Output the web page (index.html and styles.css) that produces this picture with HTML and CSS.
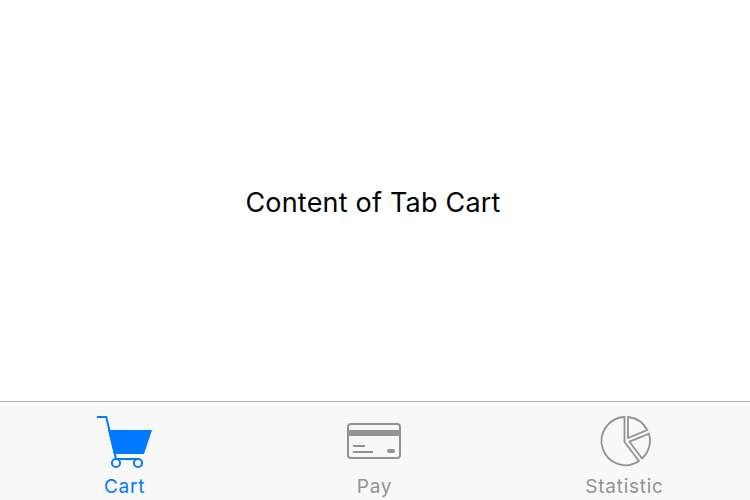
FILE: index.html
```html
<!DOCTYPE html>
<html lang="en">
<head>
<meta charset="utf-8">
<title>Tabs</title>
<link rel="stylesheet" href="styles.css">
</head>
<body>
<main class="content"><p class="message">Content of Tab Cart</p></main>
<nav class="tabbar">
  <a class="tab active">
    <svg class="icon" viewBox="0 0 60 60" fill="none" stroke="currentColor" stroke-width="2">
      <path d="M2 6H11.3L21 48"/>
      <path d="M13 19H57L49 43H19Z" fill="currentColor" stroke="none"/>
      <path d="M20 48H44"/>
      <circle cx="21" cy="52" r="4.1"/>
      <circle cx="43" cy="52" r="4.1"/>
    </svg>
    <span class="label">Cart</span>
  </a>
  <a class="tab">
    <svg class="icon" viewBox="0 0 60 60" fill="none" stroke="currentColor" stroke-width="2">
      <rect x="3" y="13" width="52" height="34" rx="3"/>
      <path d="M3 22H55" stroke-width="6"/>
      <path d="M8 35H20M8 41H28"/>
      <rect x="42" y="38" width="8" height="4" rx="2" fill="currentColor" stroke="none"/>
    </svg>
    <span class="label">Pay</span>
  </a>
  <a class="tab">
    <svg class="icon" viewBox="0 0 60 60" fill="none" stroke="currentColor" stroke-width="1.8">
      <path d="M29.5 6V31L44 50A24 24.1 0 1 1 29.5 6Z"/>
      <path d="M33 6V27L52.2 19A24 24 0 0 0 33 6Z"/>
      <path d="M34.5 30.7L54 22.7A24 24 0 0 1 47 47.5Z"/>
    </svg>
    <span class="label">Statistic</span>
  </a>
</nav>
</body>
</html>
```
FILE: styles.css
```css
* { box-sizing: border-box; }
body {
  margin: 0;
  height: 500px;
  display: flex;
  flex-direction: column;
  overflow: hidden;
  background: #fff;
  font-family: Inter, "Liberation Sans", sans-serif;
}
.content {
  flex: 1;
  display: flex;
  align-items: center;
  justify-content: center;
  padding: 5px 4px 0 0;
}
.message {
  margin: 0;
  font-size: 27px;
  line-height: 34px;
  letter-spacing: 0.2px;
  color: #000;
}
.tabbar {
  height: 99px;
  display: flex;
  background: #f8f8f8;
  border-top: 1px solid #b2b2b2;
}
.tab {
  flex: 1;
  display: flex;
  flex-direction: column;
  align-items: center;
  padding-top: 9px;
  color: #929292;
}
.tab.active { color: #007aff; }
.icon { width: 60px; height: 60px; flex: none; }
.label {
  margin-top: 4px;
  padding-right: 1px;
  font-size: 19px;
  line-height: 24px;
  letter-spacing: 0.75px;
}
```
